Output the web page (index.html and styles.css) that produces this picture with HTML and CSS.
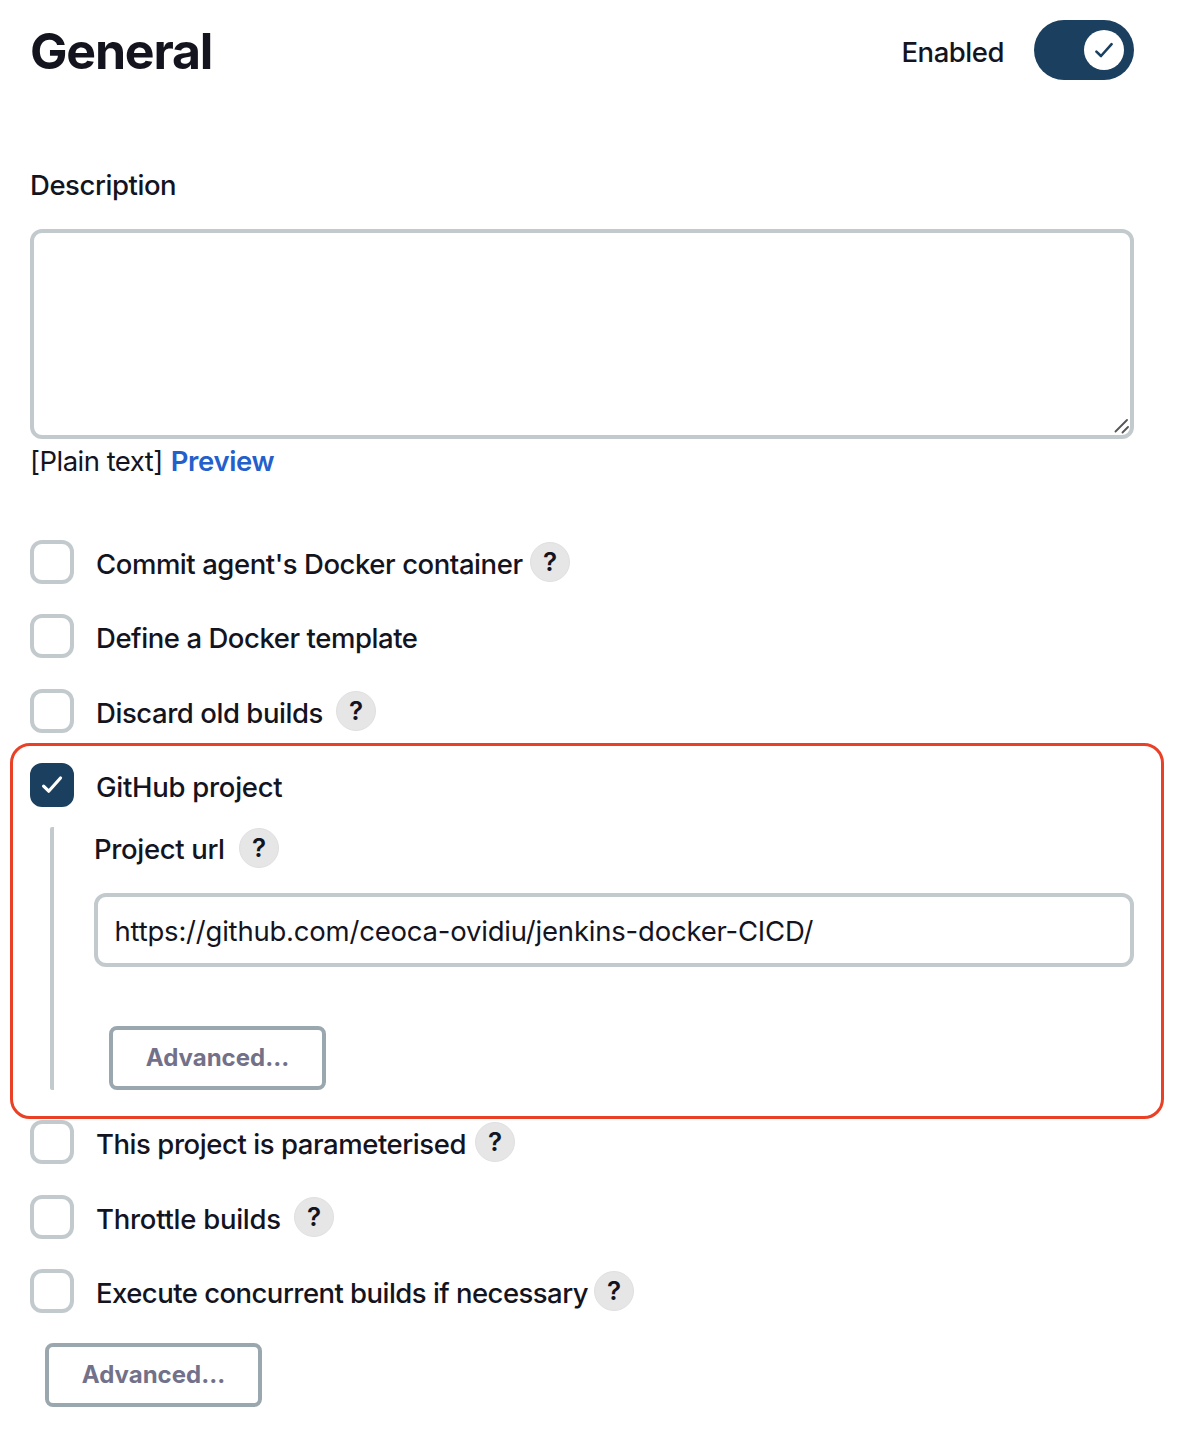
FILE: index.html
```html
<!DOCTYPE html>
<html lang="en">
<head>
<meta charset="utf-8">
<title>General</title>
<link rel="stylesheet" href="styles.css">
</head>
<body>
<main class="form">
  <header class="header">
    <h1 class="title">General</h1>
    <div class="status">
      <span class="status-label">Enabled</span>
      <span class="toggle"><span class="knob"><svg width="20" height="18" viewBox="0 0 20 18"><path d="M2.4 10.6 7 15 17.6 3.2"/></svg></span></span>
    </div>
  </header>

  <label class="description-label">Description</label>
  <div class="textarea"><svg class="grip" width="15" height="15" viewBox="0 0 15 15"><path d="M1.5 12.5 13 1M8.5 13.5 14 8"/></svg></div>
  <p class="format"><span class="plain">[Plain text]</span><a class="preview">Preview</a></p>

  <div class="option first"><span class="box"></span><span class="text commit">Commit agent's Docker container</span><span class="help">?</span></div>
  <div class="option"><span class="box"></span><span class="text define">Define a Docker template</span></div>
  <div class="option"><span class="box"></span><span class="text discard">Discard old builds</span><span class="help">?</span></div>

  <section class="highlight">
    <div class="option"><span class="box checked"><svg width="24" height="22" viewBox="0 0 24 22"><path d="M3.6 12.2 8.7 17.2 20.5 4"/></svg></span><span class="text github">GitHub project</span></div>
    <div class="nested">
      <div class="field-label"><span class="text url-label">Project url</span><span class="help">?</span></div>
      <div class="input">https://github.com/ceoca-ovidiu/jenkins-docker-CICD/</div>
      <div class="button">Advanced...</div>
    </div>
  </section>

  <div class="option"><span class="box"></span><span class="text param">This project is parameterised</span><span class="help">?</span></div>
  <div class="option"><span class="box"></span><span class="text throttle">Throttle builds</span><span class="help">?</span></div>
  <div class="option final"><span class="box"></span><span class="text execute">Execute concurrent builds if necessary</span><span class="help">?</span></div>
  <div class="button last">Advanced...</div>
</main>
</body>
</html>
```

FILE: styles.css
```css
* { box-sizing: border-box; }
body { margin: 0; background: #fff; color: #14141f; font: 500 27.5px/36px Inter, "Liberation Sans", sans-serif; letter-spacing: -0.44px; }
svg { display: block; fill: none; stroke-linecap: round; stroke-linejoin: round; }
.form { display: flex; flex-direction: column; padding: 20px 54px 0 30px; }
.header { display: flex; justify-content: space-between; height: 60px; }
.title { margin: 0; font-size: 50px; line-height: 62px; font-weight: 700; letter-spacing: -1.2px; }
.status { display: flex; gap: 30px; }
.status-label { padding-top: 14px; letter-spacing: -0.47px; }
.toggle { display: flex; justify-content: flex-end; width: 100px; height: 60px; padding: 10px; border-radius: 30px; background: #1a3f5f; }
.knob { display: grid; place-items: center; width: 40px; height: 40px; border-radius: 50%; background: #fff; }
.knob svg { stroke: #1a3f5f; stroke-width: 2.6; }
.description-label { margin-top: 87px; }
.textarea { display: flex; align-items: flex-end; justify-content: flex-end; height: 210px; margin-top: 26px; padding: 1px; border: 4px solid #c3cacd; border-radius: 12px; }
.grip { stroke: #555; stroke-width: 1.8; }
.format { display: flex; gap: 8px; margin: 4px 0 0; white-space: nowrap; font-weight: 400; }
.plain { letter-spacing: -0.53px; }
.preview { color: #2460cb; font-weight: 600; letter-spacing: -0.37px; }
.option { display: flex; height: 44px; margin-bottom: 30.5px; }
.first { margin-top: 61px; margin-bottom: 30px; }
.first + .option { margin-bottom: 31px; }
.box { display: grid; place-items: center; width: 44px; height: 44px; border: 4px solid #c3cacd; border-radius: 12px; }
.checked { border-color: #1a3f5f; background: #1a3f5f; }
.checked svg { stroke: #fff; stroke-width: 3.2; }
.text { white-space: nowrap; }
.option .text { margin: 6px 0 0 22px; }
.commit { width: 426px; }
.discard { width: 232px; }
.github { letter-spacing: -0.28px; }
.url-label { width: 137px; letter-spacing: -0.35px; }
.param { width: 371px; }
.throttle { width: 190px; letter-spacing: -0.27px; }
.execute { width: 490px; letter-spacing: -0.54px; }
.help { display: grid; place-items: center; width: 40px; height: 40px; margin: 2px 0 0 8px; border: 1px solid #e0e0e0; border-radius: 50%; background: #e6e6e6; font-size: 26px; font-weight: 600; letter-spacing: 0; }
.highlight { margin: -20.5px -30px 1px -20px; padding: 17px 27px 26px 17px; border: 3px solid #ea4025; border-radius: 20px; }
.highlight .option { margin-bottom: 20px; }
.nested { display: flex; flex-direction: column; height: 263px; margin-left: 20px; padding-left: 44px; background: linear-gradient(#c3cacd, #c3cacd) left / 4px 100% no-repeat; border-radius: 2px; }
.field-label { display: flex; }
.field-label .text { margin-top: 4px; }
.field-label .help { margin-top: 1px; }
.input { height: 74px; margin-top: 25px; padding: 16px 16.5px; border: 4px solid #c3cacd; border-radius: 12px; font-weight: 400; letter-spacing: -0.21px; }
.button { display: grid; place-items: center; width: 217px; height: 64px; margin: 59px 0 0 15px; border: 4px solid #9ba7ae; border-radius: 8px; color: #727189; font-size: 24px; font-weight: 700; letter-spacing: 0; }
.final { margin-bottom: 30px; }
.last { margin-top: 0; }
```
